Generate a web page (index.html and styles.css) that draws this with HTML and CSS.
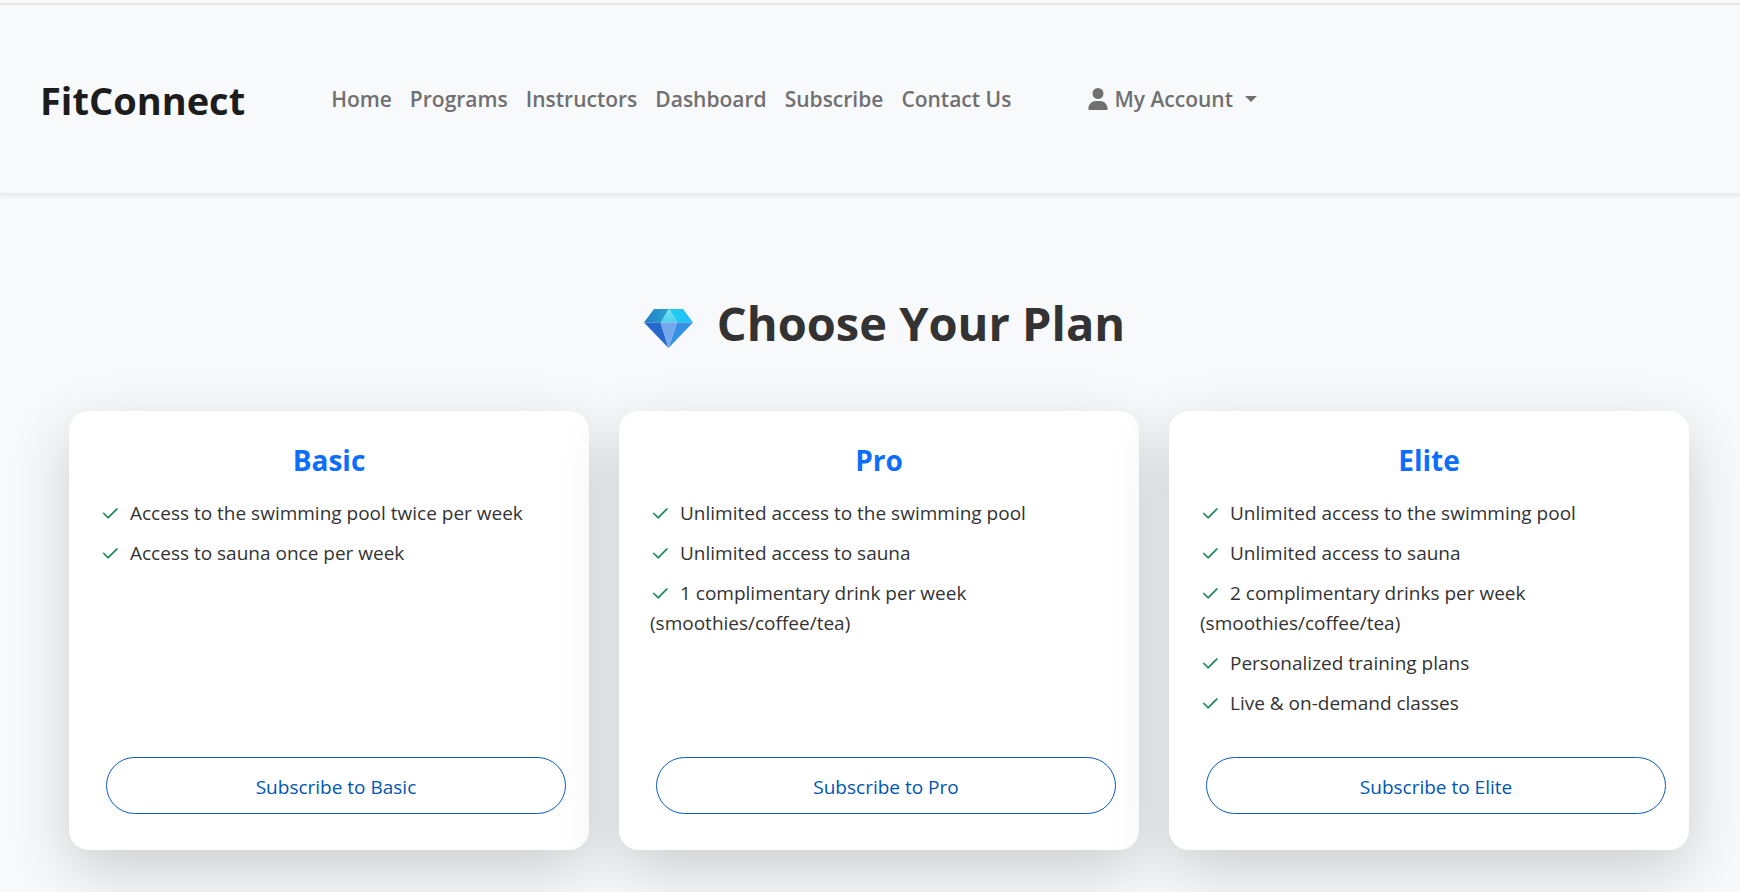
FILE: index.html
```html
<!DOCTYPE html>
<html lang="en">
<head>
<meta charset="utf-8">
<title>FitConnect</title>
<link rel="stylesheet" href="styles.css">
</head>
<body>
<svg class="sprite" aria-hidden="true">
  <symbol id="check" viewBox="0 0 16 16"><path d="M13.854 3.646a.5.5 0 0 1 0 .708l-7 7a.5.5 0 0 1-.708 0l-3.5-3.5a.5.5 0 1 1 .708-.708L6.5 10.293l6.646-6.647a.5.5 0 0 1 .708 0z"/></symbol>
</svg>
<header class="navbar">
  <a class="brand" href="#">FitConnect</a>
  <nav class="nav">
    <a href="#">Home</a>
    <a href="#">Programs</a>
    <a href="#">Instructors</a>
    <a href="#">Dashboard</a>
    <a href="#">Subscribe</a>
    <a href="#">Contact Us</a>
  </nav>
  <button class="account" type="button">
    <svg class="user" viewBox="0 0 448 512" aria-hidden="true"><path d="M224 256A128 128 0 1 0 224 0a128 128 0 1 0 0 256zm-45.700 48C79.800 304 0 383.800 0 482.300C0 498.700 13.300 512 29.700 512H418.300c16.400 0 29.700-13.300 29.700-29.700C448 383.800 368.200 304 269.700 304H178.300z"/></svg>
    <span>My Account</span>
    <span class="caret"></span>
  </button>
</header>
<main class="plans">
  <h1 class="title">
    <svg class="gem" viewBox="0 0 49 39" aria-hidden="true">
      <defs>
        <linearGradient id="g1" x1="0" y1="0" x2="1" y2="0"><stop offset="0" stop-color="#1f7fc6"/><stop offset="1" stop-color="#2ba3cf"/></linearGradient>
        <linearGradient id="g2" x1="0" y1="0" x2="1" y2="0"><stop offset="0" stop-color="#1fd0ee"/><stop offset="1" stop-color="#20bdfb"/></linearGradient>
        <linearGradient id="g3" x1="0" y1="0" x2="0" y2="1"><stop offset="0" stop-color="#78e6f2"/><stop offset="1" stop-color="#4fcdec"/></linearGradient>
      </defs>
      <path fill="url(#g1)" d="M10 0h15l-8 13.500H0z"/>
      <path fill="url(#g2)" d="M25 0h14l10 13.500H33z"/>
      <path fill="url(#g3)" d="M25 0l8 13.500H16.500z"/>
      <path fill="#2868cc" d="M0 13.500h16.500L24.500 39z"/>
      <path fill="#3390e3" d="M49 13.500H33L24.500 39z"/>
      <path fill="#73a8ef" d="M16.500 13.500H33L24.500 39z"/>
    </svg>
    <span>Choose Your Plan</span>
  </h1>
  <div class="cards">
    <section class="card">
      <h2>Basic</h2>
      <ul>
        <li><svg class="check"><use href="#check"/></svg>Access to the swimming pool twice per week</li>
        <li><svg class="check"><use href="#check"/></svg>Access to sauna once per week</li>
      </ul>
      <button class="subscribe" type="button">Subscribe to Basic</button>
    </section>
    <section class="card">
      <h2>Pro</h2>
      <ul>
        <li><svg class="check"><use href="#check"/></svg>Unlimited access to the swimming pool</li>
        <li><svg class="check"><use href="#check"/></svg>Unlimited access to sauna</li>
        <li><svg class="check"><use href="#check"/></svg>1 complimentary drink per week<br>(smoothies/coffee/tea)</li>
      </ul>
      <button class="subscribe" type="button">Subscribe to Pro</button>
    </section>
    <section class="card">
      <h2>Elite</h2>
      <ul>
        <li><svg class="check"><use href="#check"/></svg>Unlimited access to the swimming pool</li>
        <li><svg class="check"><use href="#check"/></svg>Unlimited access to sauna</li>
        <li><svg class="check"><use href="#check"/></svg>2 complimentary drinks per week<br>(smoothies/coffee/tea)</li>
        <li><svg class="check"><use href="#check"/></svg>Personalized training plans</li>
        <li><svg class="check"><use href="#check"/></svg>Live &amp; on-demand classes</li>
      </ul>
      <button class="subscribe" type="button">Subscribe to Elite</button>
    </section>
  </div>
</main>
</body>
</html>
```
FILE: styles.css
```css
* { box-sizing: border-box; }

body {
  margin: 0;
  border-top: 3px solid #f9f7f8;
  background: #f8f9fb;
  color: #333;
  font: 19px/30px "Open Sans", "Noto Sans", sans-serif;
  overflow-x: hidden;
}

.sprite { display: none; }

.navbar {
  display: flex;
  align-items: center;
  padding: 65px 40px 63px;
  border-top: 2px solid #e5e3e4;
  background: #f8f9fb;
  box-shadow: 0 3px 5px rgba(0, 0, 0, 0.08);
}

.brand {
  color: #1d1d1d;
  font-size: 38px;
  font-weight: 700;
  line-height: 60px;
  text-decoration: none;
}

.nav {
  display: flex;
  gap: 18px;
  margin: 0 77px 2px 86px;
}

.nav a,
.account {
  color: #707070;
  font: 600 21px/32px "Open Sans", "Noto Sans", sans-serif;
  text-decoration: none;
}

.account {
  display: flex;
  align-items: center;
  gap: 6px;
  margin: 0 0 2px;
  padding: 0;
  border: 0;
  background: none;
}

.user {
  width: 20px;
  height: 22px;
  fill: #707070;
}

.caret {
  margin-left: 6px;
  border: 6px solid transparent;
  border-top-color: #707070;
  border-bottom: 0;
}

.plans { padding: 100px 51px 60px 69px; }

.title {
  display: flex;
  align-items: center;
  justify-content: center;
  gap: 24px;
  margin: 0 0 58px;
  padding-left: 11px;
  font-size: 47px;
  font-weight: 700;
  line-height: 60px;
}

.gem {
  width: 49px;
  height: 39px;
  margin-top: 10px;
}

.cards {
  display: grid;
  grid-template-columns: repeat(3, 1fr);
  gap: 30px;
}

.card {
  position: relative;
  display: flex;
  flex-direction: column;
  padding: 31px 31px 36px;
  border-radius: 20px;
  background: #fff;
  box-shadow: 0 20px 60px rgba(0, 0, 0, 0.175);
}

.card h2 {
  margin: 0 0 20px;
  color: #0d6efd;
  font-size: 28px;
  font-weight: 700;
  line-height: 36px;
  text-align: center;
}

.card ul {
  flex: 1;
  margin: 0 0 29px;
  padding: 0;
  list-style: none;
}

.card li { margin-bottom: 10px; }

.check {
  width: 20px;
  height: 20px;
  margin-right: 10px;
  fill: #198754;
  stroke: #198754;
  stroke-width: 0.4;
  vertical-align: -4px;
}

.subscribe {
  height: 57px;
  margin: 0 -8px 0 6px;
  padding: 2px 0 0;
  border: 1px solid #0d5bbd;
  border-radius: 30px;
  background: #fff;
  color: #0056b3;
  font: inherit;
}
```
